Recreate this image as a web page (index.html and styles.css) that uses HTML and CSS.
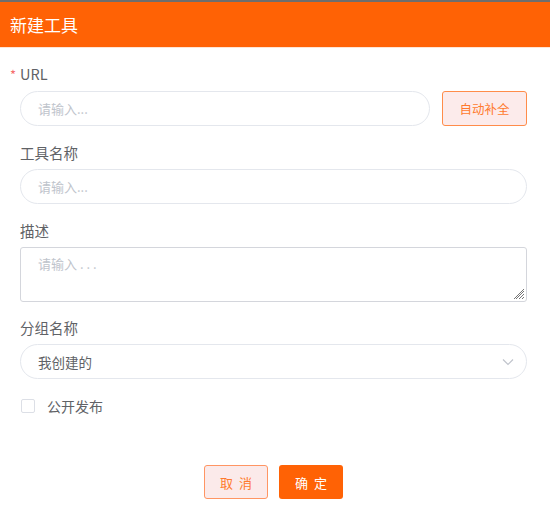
FILE: index.html
```html
<!DOCTYPE html>
<html lang="zh">
<head>
<meta charset="utf-8">
<title>新建工具</title>
<link rel="stylesheet" href="styles.css">
</head>
<body>
<div class="dialog">
  <div class="header">新建工具</div>
  <div class="form">
    <div class="field">
      <div class="label"><span class="star">*</span>URL</div>
      <div class="row">
        <div class="input grow"><span class="ph">请输入...</span></div>
        <div class="btn-auto">自动补全</div>
      </div>
    </div>
    <div class="field">
      <div class="label">工具名称</div>
      <div class="input"><span class="ph">请输入...</span></div>
    </div>
    <div class="field field-tight">
      <div class="label">描述</div>
      <div class="textarea">
        <span class="ph">请输入 . . .</span>
        <svg class="grip" width="12" height="12" viewBox="0 0 12 12"><path d="M11 3 L3 11 M11 6 L6 11 M11 9 L9 11 M11 1 L1 11" stroke="#777" stroke-width="1" fill="none"/></svg>
      </div>
    </div>
    <div class="field">
      <div class="label">分组名称</div>
      <div class="input select">
        <span class="val">我创建的</span>
        <svg class="chev" width="12" height="8" viewBox="0 0 12 8"><path d="M1 1.5 L6 6.5 L11 1.5" stroke="#c0c4cc" stroke-width="1.2" fill="none"/></svg>
      </div>
    </div>
    <div class="check">
      <span class="box"></span>
      <span class="check-text">公开发布</span>
    </div>
  </div>
  <div class="footer">
    <div class="btn cancel">取消</div>
    <div class="btn ok">确定</div>
  </div>
</div>
</body>
</html>
```
FILE: styles.css
```css
* { box-sizing: border-box; }
html, body { margin: 0; padding: 0; background: #fff; }
body {
  font-family: "Noto Sans CJK SC", "Noto Sans", sans-serif;
  width: 550px;
  height: 518px;
  border-top: 2px solid #6e6e6e;
}
.header {
  height: 46px;
  background: #ff6205;
  color: #fff;
  font-size: 17px;
  line-height: 46px;
  padding-left: 10px;
  border-bottom: 1px solid #ffe4d4;
}
.form {
  padding: 14px 23px 0 20px;
}
.field { margin-bottom: 15px; }
.field-tight { margin-bottom: 14px; }
.label {
  font-size: 14.5px;
  line-height: 24px;
  color: #5f6266;
  margin-bottom: 4px;
}
.star {
  color: #f56c6c;
  margin-left: -10px;
  margin-right: 4px;
  font-size: 13px;
}
.row { display: flex; gap: 12px; }
.grow { flex: 1; }
.input {
  height: 35px;
  border: 1px solid #e4e7ed;
  border-radius: 17.5px;
  display: flex;
  align-items: center;
  padding-left: 17px;
  font-size: 13px;
}
.ph { color: #c0c4cc; font-size: 13px; }
.btn-auto {
  width: 85px;
  height: 35px;
  border: 1px solid #ff8c4a;
  background: #fcebeb;
  color: #ff7a2e;
  border-radius: 3px;
  font-size: 12.5px;
  display: flex;
  align-items: center;
  justify-content: center;
}
.textarea {
  position: relative;
  height: 55px;
  border: 1px solid #d4d6dc;
  border-radius: 3px;
  padding: 4px 17px;
  line-height: 20px;
}
.grip { position: absolute; right: 1px; bottom: 1px; }
.select { justify-content: space-between; padding-right: 12px; }
.val { color: #606266; font-size: 13.5px; }
.check {
  display: flex;
  align-items: center;
  margin-top: 17px;
  padding-left: 1px;
}
.box {
  width: 14px;
  height: 14px;
  border: 1px solid #dcdfe6;
  border-radius: 2px;
}
.check-text {
  margin-left: 12px;
  color: #606266;
  font-size: 14px;
}
.footer {
  display: flex;
  justify-content: center;
  gap: 11px;
  margin-top: 49px;
  padding-right: 3px;
}
.btn {
  width: 64px;
  height: 34px;
  border-radius: 3px;
  display: flex;
  align-items: center;
  justify-content: center;
  font-size: 13px;
  letter-spacing: 6px;
  text-indent: 6px;
}
.cancel { border: 1px solid #ff9563; background: #fbeaea; color: #ff7a2e; }
.ok { background: #ff6205; color: #fff; }
```
